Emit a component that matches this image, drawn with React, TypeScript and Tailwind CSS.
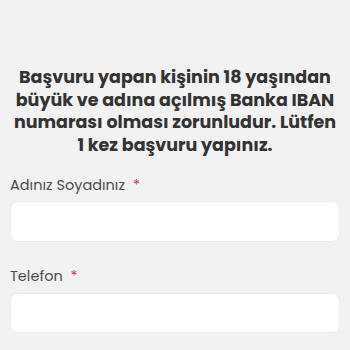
export default function App() {
    const labelCls = "text-[14.5px] text-[#4d4d4d] leading-[20px]"

    return (
        <div className="w-[350px] h-[350px] bg-[#f2f2f2] overflow-hidden" style={{ fontFamily: '"Poppins", "DejaVu Sans", sans-serif' }}>
            <div className="pt-[66px] px-[10px]">
                <h1 className="text-center font-bold text-[17.5px] leading-[22.5px] text-[#333333]">
                    Başvuru yapan kişinin 18 yaşından büyük ve adına açılmış Banka IBAN numarası olması zorunludur. Lütfen 1 kez başvuru yapınız.
                </h1>

                <form className="mt-[19px] flex flex-col">
                    <label className={labelCls}>
                        Adınız Soyadınız <span className="text-[#c9424a] ml-[4px]">*</span>
                    </label>
                    <input name="name" className="mt-[6px] h-[41px] w-full bg-white rounded-[8px] border border-[#ececec] outline-none" />

                    <label className={labelCls + " mt-[24px]"}>
                        Telefon <span className="text-[#c9424a] ml-[4px]">*</span>
                    </label>
                    <input name="phone" className="mt-[7px] h-[40px] w-full bg-white rounded-[8px] border border-[#ececec] outline-none" />
                </form>
            </div>
        </div>
    )
}
